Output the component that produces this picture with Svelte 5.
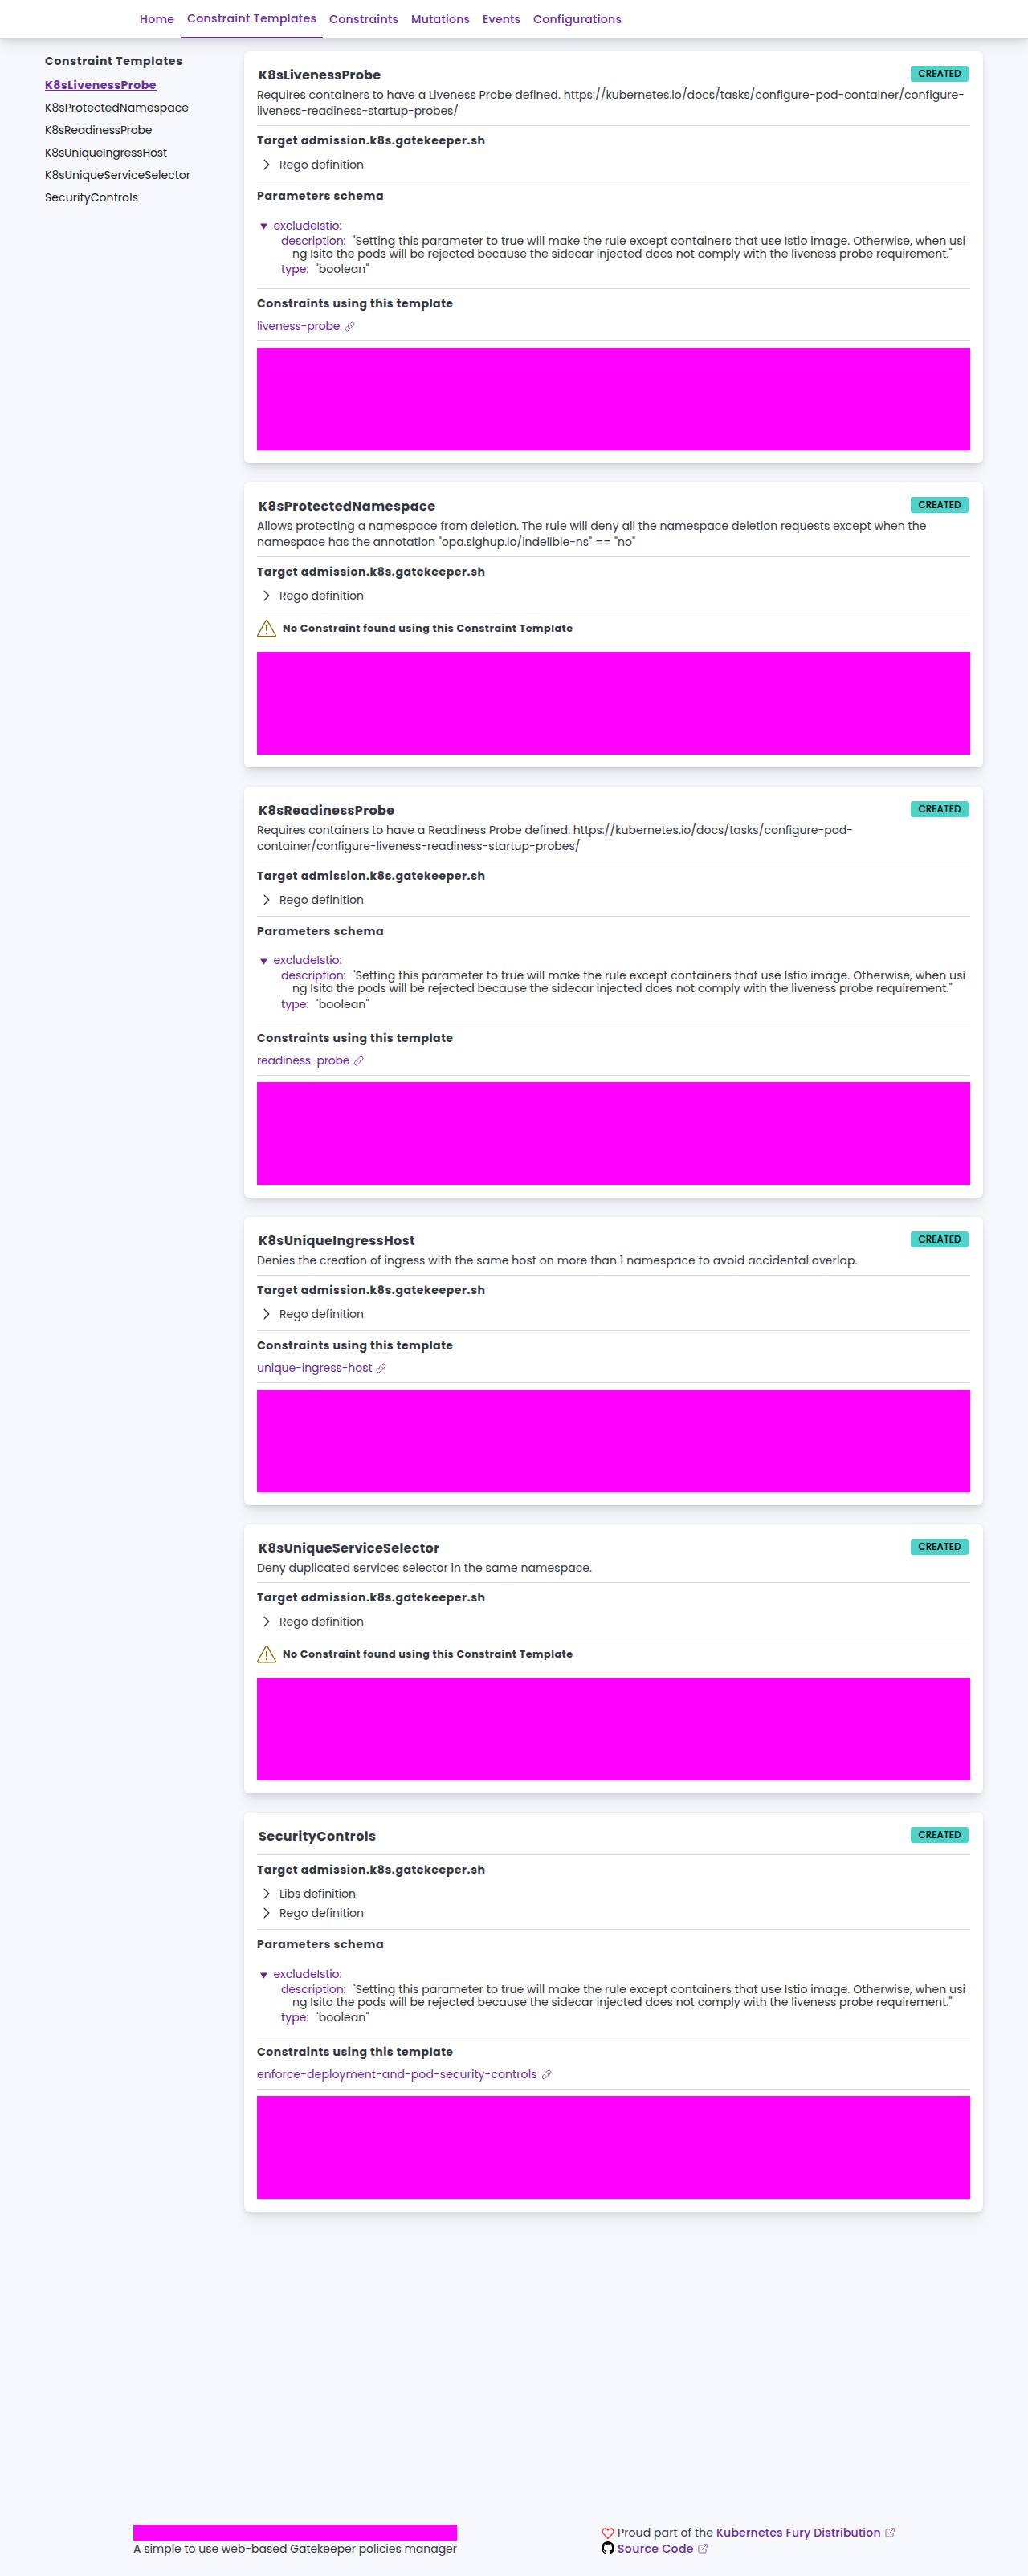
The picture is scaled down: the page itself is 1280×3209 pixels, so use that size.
<script>
  // Spreads a line of text over the given width through its letter spacing.
  function track(node, width) {
    const natural = node.getBoundingClientRect().width;
    const count = node.textContent.length;
    const spacing = (width - natural) / (count - 1);
    node.style.letterSpacing = `${spacing}px`;
    node.style.marginRight = `${-spacing}px`;
  }

  const nav = [
    { label: 'Home', w: 43 },
    { label: 'Constraint Templates', w: 161, active: true },
    { label: 'Constraints', w: 86 },
    { label: 'Mutations', w: 73 },
    { label: 'Events', w: 47 },
    { label: 'Configurations', w: 110 }
  ];

  const side = [
    { label: 'K8sLivenessProbe', w: 138.5, active: true },
    { label: 'K8sProtectedNamespace', w: 179 },
    { label: 'K8sReadinessProbe', w: 133.5 },
    { label: 'K8sUniqueIngressHost', w: 152 },
    { label: 'K8sUniqueServiceSelector', w: 181 },
    { label: 'SecurityControls', w: 116 }
  ];

  const rego = { label: 'Rego definition', w: 105 };
  const libs = { label: 'Libs definition', w: 95 };

  const templates = [
    {
      name: 'K8sLivenessProbe', w: 152,
      lines: [
        { text: 'Requires containers to have a Liveness Probe defined. https://kubernetes.io/docs/tasks/configure-pod-container/configure-', w: 881 },
        { text: 'liveness-readiness-startup-probes/', w: 251 }
      ],
      defs: [rego], schema: true, link: { text: 'liveness-probe', w: 103.5 }
    },
    {
      name: 'K8sProtectedNamespace', w: 220,
      lines: [
        { text: 'Allows protecting a namespace from deletion. The rule will deny all the namespace deletion requests except when the', w: 833.5 },
        { text: 'namespace has the annotation "opa.sighup.io/indelible-ns" == "no"', w: 471 }
      ],
      defs: [rego]
    },
    {
      name: 'K8sReadinessProbe', w: 169,
      lines: [
        { text: 'Requires containers to have a Readiness Probe defined. https://kubernetes.io/docs/tasks/configure-pod-', w: 742 },
        { text: 'container/configure-liveness-readiness-startup-probes/', w: 402.5 }
      ],
      defs: [rego], schema: true, link: { text: 'readiness-probe', w: 115.5 }
    },
    {
      name: 'K8sUniqueIngressHost', w: 194.5,
      lines: [{ text: 'Denies the creation of ingress with the same host on more than 1 namespace to avoid accidental overlap.', w: 747.5 }],
      defs: [rego], link: { text: 'unique-ingress-host', w: 143.5 }
    },
    {
      name: 'K8sUniqueServiceSelector', w: 225,
      lines: [{ text: 'Deny duplicated services selector in the same namespace.', w: 417 }],
      defs: [rego]
    },
    {
      name: 'SecurityControls', w: 146,
      lines: [], defs: [libs, rego], schema: true,
      link: { text: 'enforce-deployment-and-pod-security-controls', w: 348.5 }
    }
  ];
</script>

{#snippet line(text, w)}<span class="line" use:track={w}>{text}</span>{/snippet}

{#snippet popout()}
  <svg class="popout" viewBox="0 0 16 16" width="12" height="12">
    <path d="M13.5 8.5v4.4a1.8 1.8 0 0 1-1.8 1.8H3a1.8 1.8 0 0 1-1.8-1.8V4.4A1.8 1.8 0 0 1 3 2.6H7.5M10 1h5v5M14.7 1.3 6.5 9.5" />
  </svg>
{/snippet}

<div class="page">
  <header>
    <nav>
      {#each nav as item}
        <a class:active={item.active}>{@render line(item.label, item.w)}</a>
      {/each}
    </nav>
  </header>

  <div class="content">
    <aside>
      <h2>{@render line('Constraint Templates', 171)}</h2>
      <ul>
        {#each side as item}
          <li class:active={item.active}>{@render line(item.label, item.w)}</li>
        {/each}
      </ul>
    </aside>

    <main>
      {#each templates as t}
        <article>
          <div class="top">
            <h1>{@render line(t.name, t.w)}</h1>
            <span class="badge">{@render line('CREATED', 53)}</span>
          </div>
          {#if t.lines.length}
            <p class="desc">
              {#each t.lines as l}<span class="row">{@render line(l.text, l.w)}</span>{/each}
            </p>
          {/if}
          <hr />
          <h3>{@render line('Target admission.k8s.gatekeeper.sh', 284)}</h3>
          <div class="defs">
            {#each t.defs as d}
              <div class="def">
                <svg viewBox="0 0 16 16" width="16" height="16"><path d="M5.2 2.2 10.8 8l-5.6 5.8" /></svg>
                {@render line(d.label, d.w)}
              </div>
            {/each}
          </div>
          <hr />
          {#if t.schema}
            <h3>{@render line('Parameters schema', 157.5)}</h3>
            <div class="tree">
              <div class="node">
                <svg viewBox="0 0 9 8" width="9" height="8"><path d="M0 .4h9L4.5 7.8z" /></svg>
                <span class="key">{@render line('excludeIstio:', 85)}</span>
              </div>
              <div class="leaf">
                <span class="key">{@render line('description:', 80.5)}</span>
                {@render line('"Setting this parameter to true will make the rule except containers that use Istio image. Otherwise, when usi', 763.5)}
              </div>
              <div class="wrapped">
                {@render line('ng Isito the pods will be rejected because the sidecar injected does not comply with the liveness probe requirement."', 821.5)}
              </div>
              <div class="leaf last">
                <span class="key">{@render line('type:', 34.5)}</span>
                {@render line('"boolean"', 67)}
              </div>
            </div>
            <hr />
          {/if}
          {#if t.link}
            <h3>{@render line('Constraints using this template', 244)}</h3>
            <a class="constraint">
              {@render line(t.link.text, t.link.w)}
              <svg viewBox="0 0 16 16" width="13" height="13">
                <path d="M6.2 9.8a2.9 2.9 0 0 1 0-4.1l3.6-3.6a2.9 2.9 0 0 1 4.1 4.1l-2.3 2.3" />
                <path d="M9.8 6.2a2.9 2.9 0 0 1 0 4.1l-3.6 3.6a2.9 2.9 0 0 1-4.1-4.1l2.3-2.3" />
              </svg>
            </a>
          {:else}
            <div class="warning">
              <svg viewBox="0 0 24 24" width="24" height="24">
                <path class="frame" d="M11.1 2.2a1 1 0 0 1 1.8 0l10.4 18.3a.8.8 0 0 1-.7 1.2H1.4a.8.8 0 0 1-.7-1.2z" />
                <path class="mark" d="M12 8v6.8M12 17v2.2" />
              </svg>
              {@render line('No Constraint found using this Constraint Template', 361)}
            </div>
          {/if}
          <hr />
          <div class="code"></div>
        </article>
      {/each}
    </main>
  </div>

  <footer>
    <div class="brand">
      <div class="logo"></div>
      {@render line('A simple to use web-based Gatekeeper policies manager', 403)}
    </div>
    <div class="credits">
      <div class="credit">
        <svg class="heart" viewBox="0 0 16 16" width="16" height="16">
          <path d="M8 14.2 2.1 8.1a3.6 3.6 0 0 1 0-5.1 3.5 3.5 0 0 1 5 0l.9 1 .9-1a3.5 3.5 0 0 1 5 0 3.6 3.6 0 0 1 0 5.1z" />
        </svg>
        {@render line('Proud part of the', 119)}
        <a>{@render line('Kubernetes Fury Distribution', 204.5)}</a>
        {@render popout()}
      </div>
      <div class="credit">
        <svg class="github" viewBox="0 0 16 16" width="16" height="16">
          <path d="M8 0C3.58 0 0 3.58 0 8c0 3.54 2.29 6.53 5.47 7.59.4.07.55-.17.55-.38 0-.19-.01-.82-.01-1.49-2.01.37-2.53-.49-2.69-.94-.09-.23-.48-.94-.82-1.13-.28-.15-.68-.52-.01-.53.63-.01 1.08.58 1.23.82.72 1.21 1.87.87 2.33.66.07-.52.28-.87.51-1.07-1.78-.2-3.64-.89-3.64-3.95 0-.87.31-1.59.82-2.15-.08-.2-.36-1.02.08-2.12 0 0 .67-.21 2.2.82.64-.18 1.32-.27 2-.27s1.36.09 2 .27c1.53-1.04 2.2-.82 2.2-.82.44 1.1.16 1.92.08 2.12.51.56.82 1.27.82 2.15 0 3.07-1.87 3.75-3.65 3.95.29.25.54.73.54 1.48 0 1.07-.01 1.93-.01 2.2 0 .21.15.46.55.38A8.01 8.01 0 0 0 16 8c0-4.42-3.58-8-8-8z" />
        </svg>
        <a>{@render line('Source Code', 94.5)}</a>
        {@render popout()}
      </div>
    </div>
  </footer>
</div>

<style>
  :global(body) { margin: 0; background: #f7f8fc; }
  .page {
    box-sizing: border-box;
    min-height: 3209px;
    display: flex;
    flex-direction: column;
    background: #f7f8fc;
    color: #343741;
    font: 400 14px/20px Poppins, Inter, sans-serif;
  }
  h1, h2, h3, p, ul { margin: 0; padding: 0; list-style: none; }
  svg { flex: none; fill: none; }
  .line { display: inline-block; white-space: pre; }

  header {
    height: 47px;
    background: #fff;
    border-bottom: 1px solid #d3dae6;
    box-shadow: 0 .9px 4px -1px rgba(0, 0, 0, .08), 0 2.6px 8px -1px rgba(0, 0, 0, .06), 0 5.7px 12px -1px rgba(0, 0, 0, .05), 0 15px 15px -1px rgba(0, 0, 0, .04);
  }
  nav { display: flex; height: 47px; padding-left: 166px; }
  nav a {
    display: flex;
    align-items: center;
    padding: 1px 8px 0;
    color: #6a2ca0;
    font-weight: 500;
  }
  nav a.active { padding-top: 0; border-bottom: 1px solid #6a2ca0; }

  .content { display: flex; padding: 16px 56px 0; }
  aside { width: 248px; flex: none; padding-top: 2px; }
  aside h2 { font-size: 14px; line-height: 20px; font-weight: 700; }
  aside ul { padding-top: 6px; color: #1a1c21; }
  aside li { height: 28px; line-height: 28px; }
  aside li.active { color: #6a2ca0; font-weight: 700; }
  aside li.active .line { text-decoration: underline; }

  main { width: 920px; display: flex; flex-direction: column; gap: 24px; }
  article {
    padding: 16px;
    background: #fff;
    border-radius: 6px;
    box-shadow: 0 .9px 4px -1px rgba(0, 0, 0, .08), 0 2.6px 8px -1px rgba(0, 0, 0, .06), 0 5.7px 12px -1px rgba(0, 0, 0, .05), 0 15px 15px -1px rgba(0, 0, 0, .04);
  }
  .top {
    height: 28px;
    display: flex;
    justify-content: space-between;
    align-items: flex-start;
    padding: 0 2px;
  }
  h1 { font-size: 16px; line-height: 27px; font-weight: 700; }
  .badge {
    width: 72px;
    height: 20px;
    margin-top: 2px;
    border-radius: 3px;
    background: #4dd2ca;
    color: #000;
    font-size: 12px;
    line-height: 20px;
    font-weight: 500;
    text-align: center;
  }
  .row { display: block; height: 20px; }
  hr { height: 1px; margin: 8px 0; border: 0; background: #d3dae6; }
  h3 { height: 20px; font-size: 14px; line-height: 20px; font-weight: 700; }
  .defs { padding-top: 8px; }
  .def { display: flex; align-items: center; gap: 8px; height: 24px; padding-left: 4px; }
  .def svg { stroke: #343741; stroke-width: 1.4; stroke-linecap: round; stroke-linejoin: round; }

  .tree { box-sizing: border-box; height: 96.6px; padding: 18.9px 0 0 4px; line-height: 16px; color: #333; }
  .key { color: #6a2591; }
  .node { display: flex; align-items: center; gap: 7.5px; height: 16px; margin-bottom: 2.8px; }
  .node svg { fill: #6a2591; margin-top: 3px; }
  .leaf { display: flex; gap: 8px; height: 16px; padding-left: 26px; }
  .wrapped { height: 16px; padding-left: 40px; }
  .leaf.last { margin-top: 3.6px; }

  .constraint { display: flex; align-items: center; gap: 5px; height: 20px; margin-top: 8px; color: #6a2ca0; }
  .constraint svg { stroke: #6a2ca0; stroke-width: 1; stroke-linecap: round; margin-top: 1px; }

  .warning { display: flex; align-items: center; gap: 8px; height: 24px; font-size: 12.7px; font-weight: 700; }
  .warning .frame { stroke: #8a6a0a; stroke-width: 1.4; }
  .warning .mark { stroke: #8a6a0a; stroke-width: 2; }

  .code { height: 128px; background: #f0f; }

  footer { display: flex; margin-top: auto; padding: 0 166px 24px; }
  .brand { width: 403px; margin-right: 180px; }
  .logo { height: 20px; background: #f0f; }
  .credit { display: flex; align-items: center; gap: 4px; height: 20px; }
  .credit a { color: #6a2ca0; font-weight: 500; }
  .credit .popout { margin-left: 1px; stroke: #8f5cc0; stroke-width: 1.3; stroke-linecap: round; }
  .heart { stroke: #f22; stroke-width: 1.3; margin-top: 1px; }
  .github { fill: #000; margin-top: -3px; }
</style>
